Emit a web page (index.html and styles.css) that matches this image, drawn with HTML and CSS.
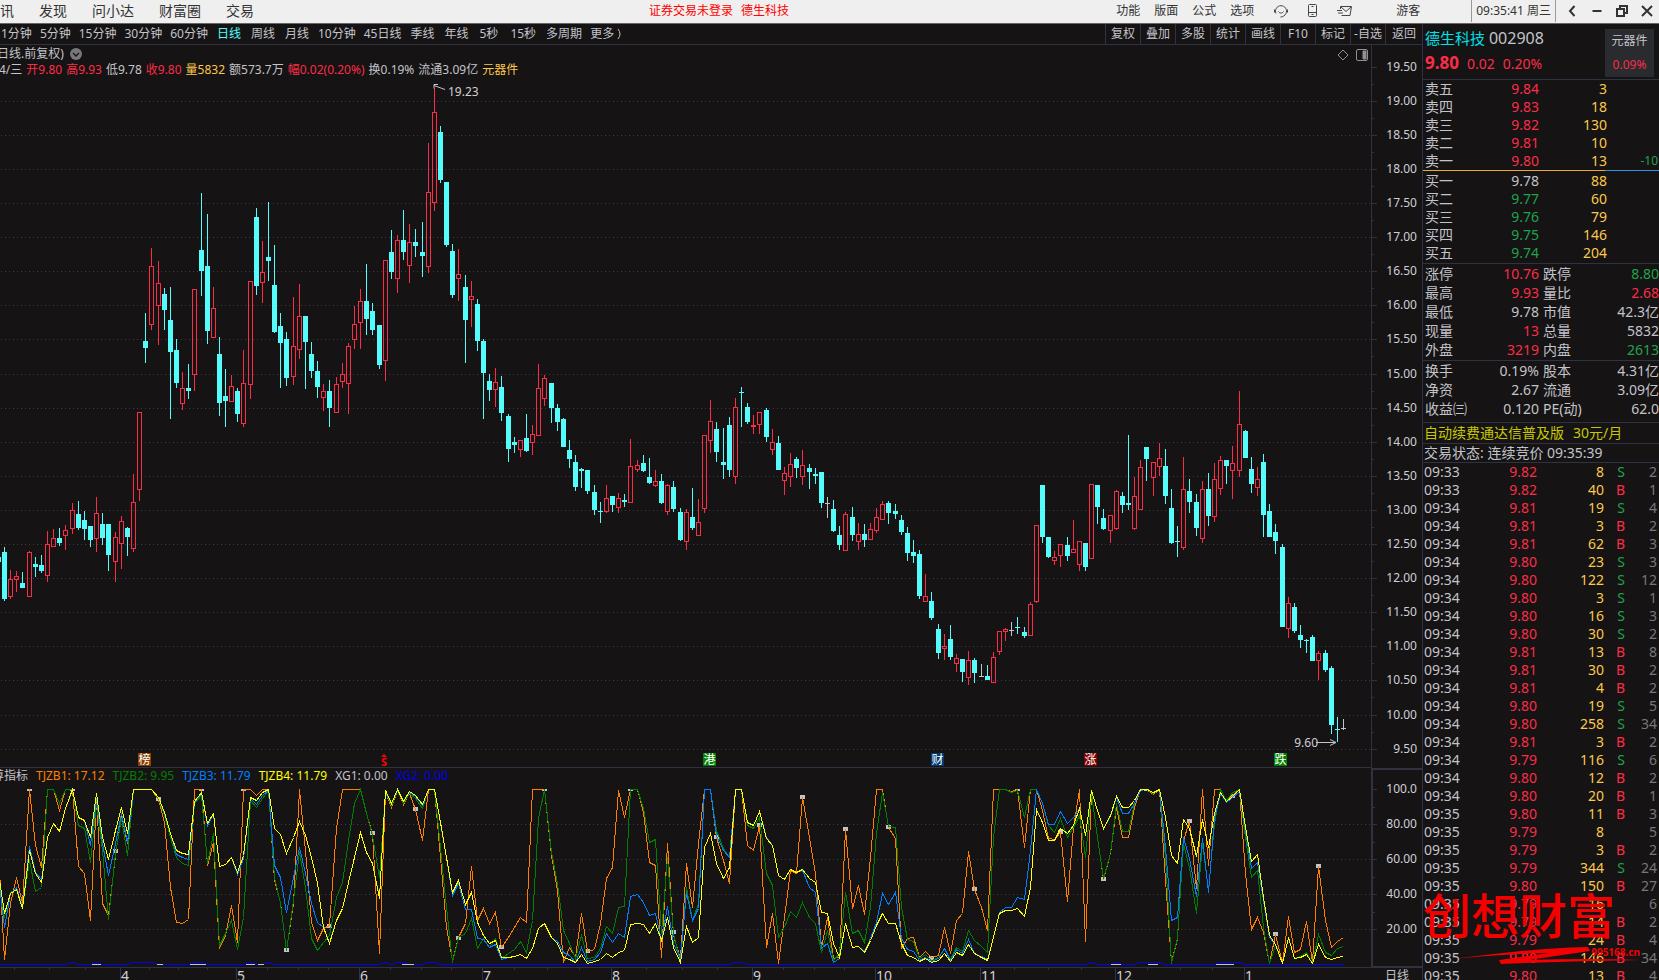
FILE: index.html
```html
<!DOCTYPE html>
<html lang="zh-CN">
<head>
<meta charset="utf-8">
<title>德生科技 002908 日线</title>
<link rel="stylesheet" href="styles.css">
</head>
<body>
<header class="menubar">
  <nav class="menu menu-main">
    <button>资讯</button><button>发现</button><button>问小达</button><button>财富圈</button><button>交易</button>
  </nav>
  <p class="login-note"><span>证券交易未登录</span><span>德生科技</span></p>
  <nav class="menu menu-tools">
    <button>功能</button><button>版面</button><button>公式</button><button>选项</button>
  </nav>
  <div class="menu-icons">
    <button aria-label="客服"><svg width="16" height="16" viewBox="0 0 16 16"><path d="M3 10.500A5.500 5.500 0 1 1 13 10.500M5.500 8.500c1 2 4 2 5 0M13 10.500c-1 2-3 3.500-5.500 3.500" /><path d="M1.500 6.500v3M14.500 6.500v3" /></svg></button>
    <button aria-label="手机"><svg width="16" height="16" viewBox="0 0 16 16"><rect x="3.500" y="1.500" width="8" height="12" rx="1"/><path d="M3.500 9.500h8M6.500 11.500h2M6.500 3.500h2"/></svg></button>
    <button aria-label="邮件"><svg width="16" height="16" viewBox="0 0 16 16"><path d="M3.500 6V3.500h11l-1.500 9H4.500M4 4l5 4.500L14 4M0 7.500h5M1 10h5"/></svg></button>
  </div>
  <button class="guest">游客</button>
  <time class="clock">09:35:41 周三</time>
  <div class="window-buttons">
    <button aria-label="后退"><svg width="14" height="14" viewBox="0 0 14 14"><path d="M9.500 2L5 7l4.500 5"/></svg></button>
    <button aria-label="最小化"><svg width="14" height="14" viewBox="0 0 14 14"><path d="M2.500 7h9"/></svg></button>
    <button aria-label="还原"><svg width="14" height="14" viewBox="0 0 14 14"><path d="M2 5h7v7H2zM5 5V2h7v7H9"/></svg></button>
    <button aria-label="关闭"><svg width="14" height="14" viewBox="0 0 14 14"><path d="M2 2l10 10M12 2L2 12"/></svg></button>
  </div>
</header>

<main class="workspace">
  <section class="chart-area">
    <div class="toolbar">
      <div class="periods">
        <button>1分钟</button><button>5分钟</button><button>15分钟</button><button>30分钟</button><button>60分钟</button><button class="word active">日线</button><button class="word">周线</button><button class="word">月线</button><button>10分钟</button><button>45日线</button><button class="word">季线</button><button class="word">年线</button><button class="seconds">5秒</button><button class="seconds">15秒</button><button>多周期</button><button>更多 <svg class="more" width="6" height="12" viewBox="0 0 6 12"><path d="M1 1q4 5 0 10"/></svg></button>
      </div>
      <div class="actions">
        <button>复权</button><button>叠加</button><button>多股</button><button>统计</button><button>画线</button><button>F10</button><button>标记</button><button>-自选</button><button>返回</button>
      </div>
    </div>

    <div class="panes">
      <div class="plot price-plot">
        <svg class="canvas" id="price"></svg>
        <div class="plot-head">
          <div class="plot-title"><span>日线.前复权)</span><svg width="12" height="12" viewBox="0 0 12 12"><circle cx="6" cy="6" r="6" fill="#77777c"/><path d="M3 5l3 3 3-3" fill="none" stroke="#151314" stroke-width="1.300"/></svg></div>
          <div class="ohlc"><span>4/三</span><span class="up">开9.80</span><span class="up">高9.93</span><span>低9.78</span><span class="up">收9.80</span><span class="vol">量5832</span><span>额573.7万</span><span class="up">幅0.02(0.20%)</span><span>换0.19%</span><span>流通3.09亿</span><span class="vol">元器件</span></div>
        </div>
        <div class="plot-tools">
          <button aria-label="标记"><svg width="12" height="12" viewBox="0 0 12 12"><path d="M6 1l5 5-5 5-5-5z"/></svg></button>
          <button aria-label="侧栏"><svg width="12" height="12" viewBox="0 0 12 12"><rect x=".5" y=".5" width="11" height="11" rx="1.500"/><path d="M7 2h3v8H7z" fill="#909096"/></svg></button>
        </div>
      </div>
      <svg class="axis" id="price-axis"></svg>
      <div class="plot">
        <svg class="canvas" id="indicator"></svg>
        <div class="legend"><span>尊指标</span><span class="l1">TJZB1: 17.12</span><span class="l2">TJZB2: 9.95</span><span class="l3">TJZB3: 11.79</span><span class="l4">TJZB4: 11.79</span><span>XG1: 0.00</span><span class="l6">XG2: 0.00</span></div>
      </div>
      <svg class="axis axis-box" id="indicator-axis"></svg>
      <svg class="months" id="months"></svg>
      <div class="period-name">日线</div>
    </div>
  </section>

  <aside class="quote">
    <header class="quote-head">
      <div>
        <h1><a href="#stock">德生科技</a> <span>002908</span></h1>
        <p class="last"><strong>9.80</strong><span>0.02</span><span>0.20%</span></p>
      </div>
      <a class="sector" href="#sector"><span>元器件</span><span class="up">0.09%</span></a>
    </header>
    <table class="book">
      <tbody id="asks"></tbody>
    </table>
    <div class="ratio"></div>
    <table class="book">
      <tbody id="bids"></tbody>
    </table>
    <table class="stats"><tbody>
      <tr><th>涨停</th><td class="up">10.76</td><th>跌停</th><td class="down">8.80</td></tr>
      <tr><th>最高</th><td class="up">9.93</td><th>量比</th><td class="up">2.68</td></tr>
      <tr><th>最低</th><td>9.78</td><th>市值</th><td>42.3亿</td></tr>
      <tr><th>现量</th><td class="up">13</td><th>总量</th><td>5832</td></tr>
      <tr><th>外盘</th><td class="up">3219</td><th>内盘</th><td class="down">2613</td></tr>
    </tbody></table>
    <table class="stats stats-extra"><tbody>
      <tr><th>换手</th><td>0.19%</td><th>股本</th><td>4.31亿</td></tr>
      <tr><th>净资</th><td>2.67</td><th>流通</th><td>3.09亿</td></tr>
      <tr><th>收益㈢</th><td>0.120</td><th>PE(动)</th><td>62.0</td></tr>
    </tbody></table>
    <a class="promo" href="#renew"><span>自动续费通达信普及版</span><span>30元/月</span></a>
    <p class="state">交易状态: 连续竞价 09:35:39</p>
    <div class="ticks-wrap"><table class="ticks"><tbody id="ticks"></tbody></table></div>
    <div class="brand">
      <div class="brand-name">创想财富</div>
      <svg class="brand-stroke" viewBox="0 0 220 20"><path d="M0 16C50 12 90 3 165 1l2 4-62 9q60-2 113 0-70 1-140 4l-2-4 50-7Q70 8 0 16z"/></svg>
      <div class="brand-url">995168.cn</div>
    </div>
  </aside>
</main>
<script src="chart.js"></script>
</body>
</html>
```

FILE: styles.css
```css
* { box-sizing: border-box; }

body {
  margin: 0;
  height: 100vh;
  min-height: 640px;
  display: flex;
  flex-direction: column;
  overflow: hidden;
  background: #151314;
  color: #c3c3ca;
  font: 12px/16px "Noto Sans", "Noto Sans CJK SC", sans-serif;
}

button {
  padding: 0;
  border: 0;
  background: none;
  color: inherit;
  font: inherit;
  white-space: nowrap;
}

a { color: inherit; text-decoration: none; }
p, h1 { margin: 0; font-weight: 400; }
table { width: 100%; border-collapse: separate; border-spacing: 0; table-layout: fixed; }
th, td { padding: 0; font-weight: 400; white-space: nowrap; }

.up { color: #fb2d46; }
.down { color: #1fa34b; }
.vol { color: #fcc84c; }

/* menu bar */
.menubar {
  flex: none;
  display: flex;
  align-items: center;
  height: 24px;
  padding-bottom: 1px;
  border-bottom: 1px solid #666;
  background: #efefef;
  color: #333;
}
.menubar svg { display: block; fill: none; stroke: #444; }
.menu { display: flex; }
.menu-main { gap: 25px; margin-left: -14px; font-size: 14px; }
.login-note { display: flex; gap: 8px; margin: 0 auto; padding-left: 68px; color: #f00; }
.menu-tools { gap: 14px; }
.menu-icons { display: flex; gap: 16px; margin-left: 19px; }
.guest { margin: 0 51px 0 43px; }
.clock { padding: 0 4px; border: solid #999; border-width: 0 1px; line-height: 22px; }
.window-buttons { display: flex; gap: 11px; padding: 0 5px 0 9px; }
.window-buttons svg { stroke: #333; stroke-width: 2; }

/* layout */
.workspace { flex: 1; min-height: 0; display: flex; }
.chart-area { flex: 1; min-width: 0; display: flex; flex-direction: column; }

.toolbar {
  flex: none;
  display: flex;
  justify-content: space-between;
  height: 21px;
  border-bottom: 1px solid #30323f;
}
.periods { display: flex; gap: 8px; padding-left: 1px; }
.periods .word { padding: 0 1px; }
.periods .seconds { padding: 0 2px; }
.periods .active { color: #54fcfc; }
.more { fill: none; stroke: currentColor; vertical-align: -2px; }
.actions { display: flex; }
.actions button { width: 35px; border-left: 1px solid #30323f; text-align: center; }
.actions button:last-child { width: 37px; }

.panes {
  flex: 1;
  min-height: 0;
  display: grid;
  grid-template-columns: minmax(0, 1fr) 51px;
  grid-template-rows: minmax(0, 723fr) minmax(0, 199fr) 13px;
}
.plot { position: relative; }
.price-plot { border-bottom: 1px solid #30323f; }
.canvas { position: absolute; inset: 0; width: 100%; height: 100%; }
.axis { width: 100%; height: 100%; border-left: 1px solid #30323f; }
.axis-box { border: 2px solid #30323f; border-width: 2px 0 1px 2px; }
.plot-head { position: relative; padding-top: 1px; overflow: hidden; white-space: nowrap; }
.plot-title { display: flex; align-items: center; gap: 6px; margin-left: -3px; }
.ohlc { display: flex; gap: 4px; margin-left: -1px; }
.plot-tools { position: absolute; top: 4px; right: 3px; display: flex; gap: 7px; }
.plot-tools svg { display: block; fill: none; stroke: #909096; }
.legend { position: relative; display: flex; gap: 8px; margin-left: -8px; overflow: hidden; white-space: nowrap; }
.l1 { color: #ff8000; }
.l2 { color: #008000; }
.l3 { color: #0080ff; }
.l4 { color: #ff0; }
.l6 { color: #0000f0; }
.months { width: 100%; height: 13px; border-top: 1px solid #30323f; }
.period-name { height: 13px; padding-right: 13px; border-top: 1px solid #30323f; text-align: right; overflow: hidden; }

svg text { font-family: "Noto Sans", "Noto Sans CJK SC", sans-serif; font-size: 12px; fill: #d0d0d4; }
.months text { font-size: 14px; }
.geo { shape-rendering: crispEdges; }
.grid { stroke: #3c3c42; stroke-dasharray: 1 3; }
.scale { stroke: #30323f; fill: none; }
.line { fill: none; stroke-width: 1; }

/* quote panel */
.quote {
  position: relative;
  flex: 0 0 237px;
  display: flex;
  flex-direction: column;
  border-left: 1px solid #30323f;
  font-size: 14px;
  overflow: hidden;
}
.quote > * { flex-shrink: 0; }
.quote-head {
  display: flex;
  justify-content: space-between;
  height: 56px;
  padding: 4px 5px 2px 2px;
  border-bottom: 1px solid #30323f;
}
.quote-head h1 { font-size: 15px; line-height: 20px; }
.quote-head h1 a { color: #00e0e8; }
.quote-head h1 span { font-size: 16px; }
.last { display: flex; gap: 8px; align-items: baseline; color: #fb2d46; line-height: 30px; }
.last strong { font-size: 17px; }
.sector {
  display: flex;
  flex-direction: column;
  justify-content: space-between;
  width: 49px;
  margin-top: 1px;
  padding: 4px 0;
  background: #292b2e;
  font-size: 12px;
  text-align: center;
}
.book tr, .ticks tr { height: 18px; line-height: 18px; }
.book th, .stats th { padding-left: 2px; text-align: left; }
.book td, .stats td, .ticks td { text-align: right; }
.book th { width: 40px; }
.book td:nth-child(2) { width: 76px; }
.book td:nth-child(3) { width: 68px; }
.book td:last-child { padding-right: 1px; font-size: 12px; }
.ratio { height: 1px; margin: 0 0 1px; background: linear-gradient(to right, #f0a830 77%, #3090e0 77%); }
.stats { margin-top: 1px; border-top: 1px solid #30323f; }
.stats tr { height: 19px; line-height: 19px; }
.stats th:first-child { width: 48px; }
.stats td:nth-child(2) { width: 68px; }
.stats th:nth-child(3) { width: 60px; padding-left: 4px; }
.stats-extra { margin-bottom: 4px; }
.promo { display: flex; gap: 9px; padding-left: 1px; border-top: 1px solid #30323f; line-height: 20px; color: #c8c800; }
.state { padding-left: 1px; border: solid #30323f; border-width: 1px 0; line-height: 18px; white-space: nowrap; }
.quote .ticks-wrap { flex: 1 1 0; min-height: 0; overflow: hidden; }
.ticks th { width: 44px; padding-left: 1px; text-align: left; }
.ticks td:nth-child(2) { width: 70px; }
.ticks td:nth-child(3) { width: 67px; }
.ticks td:nth-child(4) { width: 21px; }
.ticks td:last-child { padding-right: 2px; color: #77777c; }

.brand { position: absolute; left: 0; bottom: 14px; width: 220px; color: #f40000; }
.brand-name { margin-bottom: 5px; font: 500 48px/56px "Noto Sans CJK SC", sans-serif; white-space: nowrap; }
.brand-stroke { display: block; width: 220px; height: 20px; fill: #f40000; }
.brand-url { position: absolute; right: 3px; bottom: 8px; font-size: 10px; font-weight: 700; line-height: 12px; }
```

FILE: chart.js
```js
// Base drawing space of the plots; everything is scaled to the real pane size.
const BASE_W = 1371;
const PRICE = { top: 45, height: 722 };
const IND = { top: 768, height: 199 };
const colors = { r: '#fb2d46', d: '#54fcfc', n: '#c3c3ca' };
const barX = i => Math.floor(4.45 + 6.1422 * i);

// kind high body-top body-bottom low, first bar has index -1
const bars = `d 550 557 562 565|d 547 552 599 601|r 570 579 597 599|r 571 576 580 592|d 572 583 588 588|r 551 552 597 597|d 557 564 567 577|d 555 565 571 573|r 531 544 576 582|r 529 538 547 547|d 528 538 543 546|r 525 530 536 550|r 503 510 529 534|d 501 514 528 530|d 511 520 529 540|d 526 526 540 547|r 497 513 539 552|d 513 524 538 545|d 524 524 555 571|r 532 537 562 582|r 516 521 544 569|d 527 528 537 556|r 474 502 549 552|r 412 412 490 501|d 313 341 348 363|r 248 266 325 330|r 261 283 306 345|d 288 294 310 330|d 287 320 352 419|d 339 350 383 388|r 372 388 404 410|d 364 388 391 399|r 289 289 375 391|d 193 250 271 296|d 214 266 331 344|r 287 308 338 338|d 337 354 403 416|d 369 396 401 427|r 375 386 402 402|d 388 391 414 422|r 350 383 424 427|r 281 281 385 399|d 208 217 286 295|r 241 272 283 303|d 202 257 261 281|d 245 285 332 333|d 313 326 343 388|d 332 339 378 386|r 297 346 377 385|r 284 316 350 359|d 316 316 342 389|d 342 354 371 378|d 361 371 387 398|r 384 391 398 411|d 380 391 408 427|r 377 384 413 413|r 363 374 382 388|r 343 346 384 414|r 306 324 340 349|r 289 301 323 349|d 264 301 319 335|d 303 311 330 335|d 325 325 365 369|r 260 260 361 381|d 230 252 272 279|r 235 240 279 293|d 210 240 252 260|r 224 242 266 283|d 229 242 246 257|d 222 252 256 277|r 143 192 267 273|r 88 112 203 211|d 126 132 180 183|d 182 182 245 247|d 244 251 295 298|r 249 274 279 301|d 275 287 320 363|r 281 296 300 327|d 299 304 341 351|d 339 341 373 419|d 374 381 390 401|r 368 382 390 407|d 376 387 413 421|d 414 416 449 462|d 437 442 445 453|r 440 440 450 457|d 414 438 451 452|r 425 434 443 455|r 364 388 436 436|r 375 378 399 406|d 383 383 408 423|d 404 408 422 431|d 418 419 447 447|d 440 450 459 468|d 455 462 487 491|d 468 469 471 488|d 470 470 491 494|d 485 492 510 515|d 502 511 512 523|r 485 498 512 513|d 496 496 505 512|r 493 498 508 513|d 494 500 502 507|r 439 466 503 503|r 460 465 470 472|d 455 463 471 472|d 458 477 483 484|r 470 481 486 487|d 474 481 503 504|r 484 485 512 515|d 481 487 509 512|d 508 512 540 541|r 509 512 542 550|d 488 517 528 530|r 499 522 536 536|r 435 435 509 513|r 400 421 441 453|d 422 429 452 462|d 428 462 465 479|d 417 425 470 477|r 398 407 477 484|d 387 392 393 427|d 403 407 422 424|r 415 425 427 434|r 412 412 425 434|d 408 410 437 442|r 429 442 450 455|d 436 443 470 470|r 467 473 481 495|r 453 464 477 487|d 457 459 468 478|r 450 465 477 485|d 464 468 472 489|d 468 474 476 484|d 472 472 503 508|n 497 503 504 518|d 500 509 531 532|d 526 535 545 550|r 512 514 551 551|d 507 517 535 541|r 523 534 542 550|d 524 534 540 547|r 523 529 540 540|r 508 517 531 533|r 501 504 520 520|d 501 503 513 524|d 504 511 514 519|d 515 520 532 535|d 527 533 553 561|d 540 552 556 563|d 550 554 596 599|r 574 596 602 602|d 592 601 618 620|d 624 629 653 659|r 634 646 649 660|d 625 639 657 660|r 654 658 664 672|d 659 659 672 682|r 651 660 678 685|d 658 660 673 683|n 664 676 677 677|d 665 676 680 680|r 652 657 683 683|r 631 631 652 655|r 628 629 632 641|n 622 630 631 636|d 617 627 628 634|d 627 632 636 638|r 602 604 636 636|r 525 525 602 603|d 485 485 537 543|d 537 537 557 558|r 551 557 561 565|r 544 544 556 567|d 537 545 556 561|r 520 549 553 553|r 541 541 565 571|d 543 543 567 571|r 484 484 559 559|d 485 485 507 524|d 509 518 529 530|r 515 515 531 543|r 490 491 529 530|d 492 496 505 513|d 435 503 505 510|r 477 496 529 530|r 460 467 510 510|d 447 447 459 481|r 462 462 478 496|r 443 458 467 476|d 449 466 496 504|d 489 508 543 544|d 526 541 542 557|r 457 489 548 550|d 479 491 502 513|d 494 502 528 536|r 481 489 539 543|d 473 489 516 526|r 463 479 517 522|r 456 460 489 495|d 460 460 466 484|r 446 463 471 499|r 391 424 471 477|d 430 431 458 458|d 457 469 484 493|r 467 479 488 496|d 454 462 515 537|d 504 511 537 537|d 524 532 541 554|d 544 547 627 627|r 597 603 629 638|d 603 607 631 633|d 625 635 640 648|d 639 640 641 653|d 635 637 661 661|r 651 653 661 680|d 650 653 670 672|d 666 668 725 734|d 717 729 730 742|n 719 728 729 730`.split('|').map(s => {
  const [kind, ...v] = s.split(' ');
  return [kind, ...v.map(Number)];
});

// Indicator series, in thirds of a pixel below LINE_TOP, first point has index -1
const LINE_TOP = 740;
const series = [
  ['#ff8000', [340,658,490,410,490,148,315,380,148,148,210,148,148,378,398,540,180,490,525,345,225,310,148,148,148,148,178,245,440,547,550,536,148,148,375,305,625,585,495,605,148,148,165,148,148,420,485,630,490,148,330,545,600,565,555,265,148,148,148,148,220,280,640,155,200,150,192,160,207,300,148,148,350,560,660,592,550,378,540,505,550,515,620,592,560,530,545,148,148,148,345,450,665,620,650,520,632,628,550,415,380,150,232,148,148,215,367,374,652,310,585,655,368,500,310,148,148,290,360,430,148,148,315,330,255,620,518,670,530,390,398,171,290,400,620,530,655,650,268,505,435,522,350,148,148,260,295,625,595,592,650,632,652,645,560,640,540,520,332,447,500,570,148,148,148,152,148,320,148,148,210,295,298,275,482,260,148,602,160,290,418,340,200,292,292,200,148,148,162,148,420,665,595,300,243,445,148,375,148,148,180,165,148,400,568,530,575,668,583,670,527,635,628,542,665,378,540,622,602,592]],
  ['#008000', [430,530,455,445,505,360,453,442,148,148,190,148,148,255,265,365,190,330,536,340,235,345,148,148,148,148,175,225,290,350,368,376,190,165,370,280,615,580,540,628,530,180,200,175,150,410,490,630,480,335,440,595,630,605,585,470,425,300,190,148,220,285,410,155,195,150,190,160,175,205,148,148,320,500,665,590,580,535,625,595,620,595,655,640,628,603,635,540,235,148,335,430,570,610,655,585,655,650,625,558,580,500,498,148,148,205,305,296,580,350,580,665,440,540,490,148,148,270,325,350,148,148,255,263,230,400,435,590,560,512,530,485,530,550,637,570,660,640,455,580,570,605,500,280,155,258,262,500,598,603,655,642,660,650,625,658,620,632,570,600,618,635,290,148,148,155,150,230,148,148,190,255,275,235,292,260,225,350,160,290,415,340,190,273,273,190,148,148,160,148,350,668,590,310,380,518,310,450,250,148,180,155,148,290,412,390,560,670,615,670,590,655,648,635,670,583,635,645,625,619]],
  ['#0080ff', [410,560,460,442,500,318,395,418,290,248,273,205,150,232,240,315,175,310,405,310,220,305,148,148,148,148,172,218,280,342,350,356,185,158,255,222,377,373,352,402,355,175,192,165,150,375,410,515,410,320,400,490,545,560,605,540,505,425,350,275,335,370,470,152,188,150,183,155,168,195,148,148,250,350,465,430,508,508,595,598,620,612,657,652,648,642,655,625,565,548,592,602,635,645,665,620,663,658,635,580,606,580,592,467,463,485,525,520,600,497,610,655,455,540,505,148,148,285,330,350,148,148,245,255,212,290,315,405,418,388,395,390,442,455,625,610,667,655,550,620,617,633,595,545,458,492,455,595,628,632,660,650,662,655,625,660,628,638,598,640,648,657,590,515,502,502,472,478,330,148,190,253,253,212,248,230,205,285,150,210,265,228,172,220,220,190,150,148,155,148,320,540,532,292,355,468,295,455,230,158,187,170,152,270,385,365,480,590,612,670,590,655,652,642,668,613,650,657,652,649]],
  ['#ffff00', [395,520,458,448,505,330,400,425,290,248,273,205,148,232,240,290,160,290,357,270,200,280,148,148,148,148,172,215,280,330,338,343,182,155,250,218,377,373,350,395,345,170,180,155,148,265,283,340,290,242,285,350,430,560,608,540,505,425,350,275,335,370,475,150,188,148,183,153,165,193,148,148,245,350,455,420,492,455,545,585,610,600,650,652,648,642,655,625,565,548,592,610,650,658,667,643,668,664,658,640,650,635,630,553,550,552,580,550,600,532,620,667,557,607,590,320,280,370,413,380,148,148,245,255,212,295,315,405,418,386,395,388,413,427,516,518,610,650,550,622,617,635,600,555,518,550,550,610,645,650,663,655,665,660,640,663,637,645,612,640,650,660,590,518,510,510,505,528,440,208,245,300,300,265,280,255,205,285,150,210,265,225,167,202,202,180,148,148,155,148,230,345,370,238,265,348,238,320,220,155,183,167,148,260,362,343,470,585,612,670,590,655,652,642,668,613,650,657,652,649]]
];
const markers = [150,150,333,177,150,150,630,558,279,207,594,621,150,633,150,576,291,255,171,267,261,654,447,150,276,417,150,243,168,582,378];
const signalBars = [11, 15, 21, 22, 23, 24, 31, 32, 40, 43, 62, 64, 65, 69, 70, 119, 120, 177, 181, 185, 186, 187, 188, 198, 199, 200, 201];
const signalGaps = [[92, 101], [157, 163], [190, 206], [246, 255], [258, 264], [402, 414], [1111, 1121], [1148, 1158], [1216, 1234]];
const badges = [[138, '榜', '#8a4000'], [703, '港', '#008000'], [931, '财', '#003a70'], [1084, '涨', '#800000'], [1274, '跌', '#008000']];
const months = [[120, '4'], [236, '5'], [359, '6'], [482, '7'], [611, '8'], [752, '9'], [875, '10'], [980, '11'], [1115, '12'], [1244, '1']];
const monthTicks = [14, 49, 85, 149, 178, 207, 267, 298, 328, 390, 421, 451, 514, 547, 579, 646, 682, 717, 783, 814, 844, 901, 928, 954, 1014, 1048, 1081, 1147, 1180, 1212];

const line = (x1, y1, x2, y2, cls) => `<path class="${cls}" d="M${x1} ${y1}L${x2} ${y2}"/>`;
const rect = (x, y, w, h, fill) => `<rect x="${x}" y="${y}" width="${w}" height="${h}" fill="${fill}"/>`;

function space(svg, area) {
  const w = svg.parentElement.clientWidth, h = svg.parentElement.clientHeight;
  return {
    w, h,
    x: v => Math.round(v * w / BASE_W),
    y: v => Math.round((v - area.top) * h / area.height)
  };
}

function drawPrice() {
  const svg = document.getElementById('price');
  const s = space(svg, PRICE);
  let out = '<g class="geo">', axis = '<g class="geo">', labels = '';
  for (let k = 0; k <= 20; k++) {
    const y = s.y(Math.floor(67.1 + k * 34.1));
    if (k) out += line(1, y + .5, s.w, y + .5, 'grid');
    axis += line(0, y + .5, 5, y + .5, 'scale');
    if (k < 20) axis += line(0, y + 17.5, 2, y + 17.5, 'scale');
    labels += `<text x="45" y="${y + 4}" text-anchor="end">${(19.5 - k / 2).toFixed(2)}</text>`;
  }
  bars.forEach(([kind, hi, top, bottom, lo], n) => {
    const x = s.x(barX(n - 1)), c = colors[kind];
    const [a, b, d, e] = [hi, top, bottom, lo].map(s.y);
    if (kind === 'r') {
      out += rect(x, a, 1, b - a, c) + rect(x, d, 1, e - d, c);
      out += `<rect x="${x - 1.5}" y="${b + .5}" width="4" height="${Math.max(1, d - b - 1)}" fill="none" stroke="${c}"/>`;
    } else {
      out += rect(x, a, 1, Math.max(1, e - a), c) + rect(x - 2, b, 5, Math.max(1, d - b), c);
    }
  });
  out += '</g>';
  const px = s.x(434), py = s.y(85), qx = s.x(1336), qy = s.y(742);
  out += `<path class="line" stroke="#c3c3ca" d="M${px + 11} ${py + 4.5}L${px} ${py + .5}M${px + 4} ${py - .5}h-4v4"/>`;
  out += `<text x="${px + 14}" y="${py + 11}">19.23</text>`;
  out += `<path class="line" stroke="#c3c3ca" d="M${qx - 20} ${qy + .5}h20M${qx - 6} ${qy - 2.5}l6 3-6 3"/>`;
  out += `<text x="${qx - 18}" y="${qy + 5}" text-anchor="end">9.60</text>`;
  badges.forEach(([bx, t, c]) => {
    const x = s.x(bx), y = s.y(753);
    out += rect(x, y, 13, 13, c) + `<text x="${x + 6.5}" y="${y + 11}" text-anchor="middle" style="fill:#fff">${t}</text>`;
  });
  const dx = s.x(384), dy = s.y(766);
  out += `<path d="M${dx - 3} ${dy - 9}l3-3 3 3z" fill="#f00"/>`;
  out += `<text x="${dx}" y="${dy}" text-anchor="middle" font-weight="700" style="fill:#f00;font-size:11px">S</text>`;
  svg.innerHTML = out;
  document.getElementById('price-axis').innerHTML = axis + '</g>' + labels;
}

function drawIndicator() {
  const svg = document.getElementById('indicator');
  const s = space(svg, IND);
  const y3 = v => s.y(LINE_TOP + v / 3);
  let out = '<g class="geo">', axis = '<g class="geo">', labels = '';
  for (let k = 0; k < 5; k++) {
    const y = s.y(789 + k * 35);
    if (k) out += line(1, y + .5, s.w, y + .5, 'grid');
    axis += line(0, y - 1.5, 4, y - 1.5, 'scale');
    if (k < 4) axis += line(0, y + 16.5, 2, y + 16.5, 'scale');
    labels += `<text x="44" y="${y + 2}" text-anchor="end">${['100.0', '80.00', '60.00', '40.00', '20.00'][k]}</text>`;
  }
  markers.forEach((v, n) => { out += rect(s.x(barX(4 + n * 7)) - 2, y3(v) - (v === 150 ? 1 : 2), 5, v === 150 ? 2 : 4, '#c3c3ca'); });
  series.forEach(([c, pts]) => {
    const d = pts.map((v, n) => `${s.x(barX(n - 1)) + .5},${y3(v) + .5}`).join(' ');
    out += `<polyline class="line" stroke="${c}" points="${d}"/>`;
  });
  let base = '';
  for (let i = -1; i <= 218; i++) base += `${s.x(barX(i)) + .5},${s.y(signalBars.includes(i) ? 962 : 964) + .5} `;
  out += `<polyline class="line" stroke="#0000ff" points="${base}"/>`;
  signalGaps.forEach(([a, b]) => { out += rect(s.x(a), s.y(964), s.x(b) - s.x(a), 1, '#c3c3ca'); });
  svg.innerHTML = out + '</g>';
  document.getElementById('indicator-axis').innerHTML = axis + '</g>' + labels;

  let m = '<g class="geo">', t = '';
  monthTicks.forEach(x => { m += line(s.x(x) + .5, 0, s.x(x) + .5, 2, 'scale'); });
  months.forEach(([x, name]) => {
    m += line(s.x(x) + .5, 0, s.x(x) + .5, 13, 'scale');
    t += `<text x="${s.x(x) + 1}" y="13">${name}</text>`;
  });
  document.getElementById('months').innerHTML = m + '</g>' + t;
}

function fillTables() {
  const book = rows => rows.map(([n, p, v, c, d]) => `<tr><th>${n}</th><td class="${c}">${p}</td><td class="vol">${v}</td><td class="down">${d || ''}</td></tr>`).join('');
  document.getElementById('asks').innerHTML = book([['卖五', '9.84', 3, 'up'], ['卖四', '9.83', 18, 'up'], ['卖三', '9.82', 130, 'up'], ['卖二', '9.81', 10, 'up'], ['卖一', '9.80', 13, 'up', '-10']]);
  document.getElementById('bids').innerHTML = book([['买一', '9.78', 88, ''], ['买二', '9.77', 60, 'down'], ['买三', '9.76', 79, 'down'], ['买四', '9.75', 146, 'down'], ['买五', '9.74', 204, 'down']]);
  const ticks = `33 82 8 S 2|33 82 40 B 1|34 81 19 S 4|34 81 3 B 2|34 81 62 B 3|34 80 23 S 3|34 80 122 S 12|34 80 3 S 1|34 80 16 S 3|34 80 30 S 2|34 81 13 B 8|34 81 30 B 2|34 81 4 B 2|34 80 19 S 5|34 80 258 S 34|34 81 3 B 2|34 79 116 S 6|34 80 12 B 2|34 80 20 B 1|35 80 11 B 3|35 79 8  5|35 79 3 B 2|35 79 344 S 24|35 80 150 B 27|35 79 16  6|35 79 14 B 2|35 79 24 B 4|35 80 146 B 34|35 80 13 B 4`;
  document.getElementById('ticks').innerHTML = ticks.split('|').map(r => {
    const [m, p, v, side, n] = r.split(' ');
    return `<tr><th>09:${m}</th><td class="up">9.${p}</td><td class="vol">${v}</td><td class="${side === 'S' ? 'down' : 'up'}">${side}</td><td>${n}</td></tr>`;
  }).join('');
}

function draw() { drawPrice(); drawIndicator(); }
fillTables();
draw();
window.addEventListener('resize', draw);
```
